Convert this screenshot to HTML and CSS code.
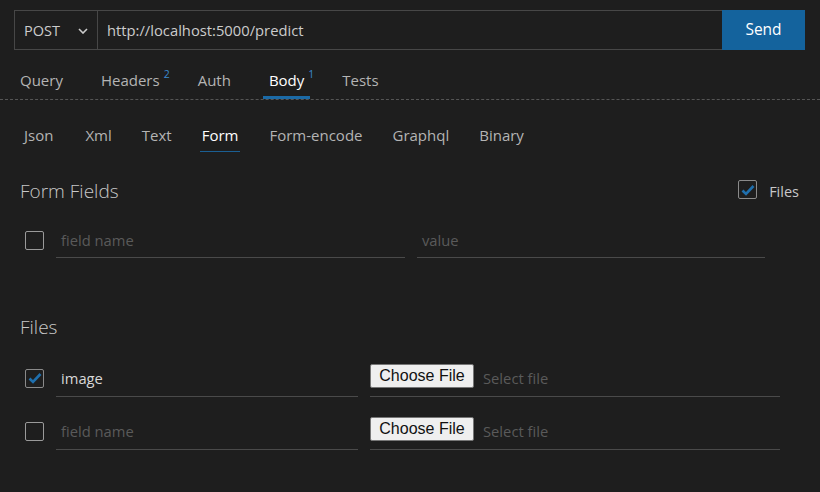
FILE: index.html
```html
<!DOCTYPE html>
<html>
<head>
<meta charset="utf-8">
<link rel="stylesheet" href="styles.css">
</head>
<body>
<div class="topbar">
  <div class="method"><span>POST</span>
    <svg class="chev" width="10" height="6" viewBox="0 0 10 6"><path d="M1 1 L5 5 L9 1" fill="none" stroke="#cccccc" stroke-width="1.6"/></svg>
  </div>
  <div class="url">http://localhost:5000/predict</div>
  <div class="send">Send</div>
</div>

<div class="tabs">
  <div class="tab">Query</div>
  <div class="tab">Headers<sup>2</sup></div>
  <div class="tab">Auth</div>
  <div class="tab active">Body<sup>1</sup></div>
  <div class="tab">Tests</div>
</div>

<div class="subtabs">
  <div class="sub first">Json</div>
  <div class="sub">Xml</div>
  <div class="sub">Text</div>
  <div class="sub active">Form</div>
  <div class="sub">Form-encode</div>
  <div class="sub">Graphql</div>
  <div class="sub">Binary</div>
</div>

<div class="section-head">
  <div class="title">Form Fields</div>
  <div class="files-toggle">
    <span class="cb checked"><svg width="14" height="12" viewBox="0 0 14 12"><path d="M1.5 6.5 L5 10 L12.5 2" fill="none" stroke="#1f6fad" stroke-width="2.6"/></svg></span>
    <span class="ft-label">Files</span>
  </div>
</div>

<div class="row form-row">
  <span class="cb"></span>
  <div class="field name placeholder">field name</div>
  <div class="field value placeholder">value</div>
</div>

<div class="section-head files-head">
  <div class="title">Files</div>
</div>

<div class="row file-row">
  <span class="cb checked"><svg width="14" height="12" viewBox="0 0 14 12"><path d="M1.5 6.5 L5 10 L12.5 2" fill="none" stroke="#1f6fad" stroke-width="2.6"/></svg></span>
  <div class="field fname">image</div>
  <div class="field ffile"><button class="choose">Choose File</button><span class="placeholder">Select file</span></div>
</div>
<div class="row file-row">
  <span class="cb"></span>
  <div class="field fname placeholder">field name</div>
  <div class="field ffile"><button class="choose">Choose File</button><span class="placeholder">Select file</span></div>
</div>
</body>
</html>
```

FILE: styles.css
```css
* { box-sizing: border-box; }
html, body { margin: 0; padding: 0; }
body {
  width: 820px;
  height: 492px;
  background: #1e1e1e;
  color: #cccccc;
  font-family: "Open Sans", "Noto Sans", sans-serif;
  font-size: 14px;
  overflow: hidden;
}

.topbar {
  display: flex;
  height: 40px;
  margin: 10px 15px 0 14px;
}
.method {
  width: 84px;
  border: 1px solid #474747;
  display: flex;
  align-items: center;
  justify-content: space-between;
  padding: 0 9px 0 9px;
  font-size: 14.5px;
  color: #cccccc;
}
.chev { margin-top: 1px; }
.url {
  flex: 1;
  border-top: 1px solid #474747;
  border-bottom: 1px solid #474747;
  display: flex;
  align-items: center;
  padding-left: 9px;
  font-size: 14.75px;
  color: #cccccc;
}
.send {
  width: 83px;
  background: #14639d;
  color: #ffffff;
  display: flex;
  align-items: center;
  justify-content: center;
  font-size: 15.5px;
  padding-bottom: 3px;
}

.tabs {
  display: flex;
  margin-top: 12px;
  height: 38px;
  border-bottom: 1px dashed #555555;
  padding-left: 20px;
}
.tab {
  font-size: 15px;
  color: #b4b4b4;
  height: 37px;
  line-height: 36px;
  margin-right: 38px;
  position: relative;
  white-space: nowrap;
}
.tab sup {
  position: absolute;
  right: -10px;
  top: 6px;
  color: #3a8ad0;
  font-size: 10.5px;
  line-height: 12px;
}
.tab.active {
  color: #ffffff;
  font-weight: 500;
  border-bottom: 3px solid #1b6aa6;
  padding: 0 6px;
  margin-left: -6px;
  margin-right: 32px;
}
.tab.active sup { right: -4px; }

.subtabs {
  display: flex;
  margin-top: 22px;
  padding-left: 24px;
  height: 30px;
}
.sub {
  font-size: 15px;
  color: #b4b4b4;
  margin-right: 30px;
  line-height: 26px;
  height: 30px;
  white-space: nowrap;
}
.sub.first { margin-right: 32px; }
.sub.active {
  color: #ffffff;
  border-bottom: 1px solid #1b5f93;
  padding: 0 2px;
  margin-left: -2px;
  margin-right: 29px;
}

.section-head {
  display: flex;
  justify-content: space-between;
  align-items: center;
  padding: 0 20px 0 20px;
  margin-top: 25px;
  height: 28px;
}
.title {
  font-size: 19px;
  color: #c8c8c8;
  font-weight: 300;
}
.files-toggle {
  display: flex;
  align-items: center;
  gap: 12px;
  margin-right: 1px;
}
.files-toggle .cb { margin-top: -3px; }
.ft-label {
  font-size: 14.5px;
  color: #c8c8c8;
}
.cb {
  display: inline-flex;
  width: 19px;
  height: 19px;
  border: 1px solid #9a9a9a;
  border-radius: 2px;
  align-items: center;
  justify-content: center;
  flex: none;
}
.cb.checked { border-color: #8a8a8a; }

.row {
  display: flex;
  align-items: center;
  padding-left: 25px;
  height: 40px;
}
.row > .cb { margin-top: 5px; }
.form-row { margin-top: 13px; }
.field {
  height: 40px;
  border-bottom: 1px solid #4a4a4a;
  display: flex;
  align-items: center;
  padding: 4px 0 0 5px;
  font-size: 14.75px;
  color: #d8d8d8;
}
.placeholder { color: #5a5a5a; }
.form-row .name { width: 349px; margin-left: 12px; }
.form-row .value { width: 348px; margin-left: 12px; }

.files-head { margin-top: 55px; }

.file-row { margin-top: 16px; }
.file-row + .file-row { margin-top: 13px; }
.file-row > .cb { margin-top: 2px; }
.file-row .field { padding-top: 2px; }
.fname { width: 302px; margin-left: 12px; }
.ffile { width: 410px; margin-left: 12px; gap: 9px; }
.file-row .ffile { padding-left: 0; }
.choose {
  font-family: "Liberation Sans", Arial, sans-serif;
  font-size: 16px;
  color: #111111;
  background: #efefef;
  border: 1px solid #767676;
  border-radius: 2px;
  height: 24px;
  width: 104px;
  padding: 0;
  margin-top: -3px;
}
.ffile .placeholder { font-size: 14.75px; }
```
